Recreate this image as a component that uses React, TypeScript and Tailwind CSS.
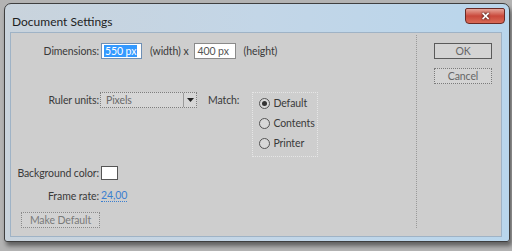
import React from "react";

const font = "font-['Lato','Liberation_Sans',sans-serif]";

const Radio = ({ label, checked }: { label: string; checked?: boolean }) => (
  <div className="flex items-center h-[14px] gap-[3px]">
    <span className="w-[11px] h-[11px] rounded-full border border-[#555] bg-[#d8d8d8] flex items-center justify-center">
      {checked && <span className="w-[5px] h-[5px] rounded-full bg-[#333]" />}
    </span>
    <span className="text-[#3a3a3a]">{label}</span>
  </div>
);

export default function App() {
  return (
    <div className={`w-[512px] h-[251px] bg-[#b3b3b3] pt-[3px] pl-[4px] overflow-hidden whitespace-nowrap ${font} text-[10.5px] tracking-[-0.1px] leading-[14px]`}>
      <div className="w-[506px] h-[239px] rounded-t-[7px] rounded-b-[3px] border border-[#3f3f3f] bg-gradient-to-r from-[#c9d3dc] via-[#c3d6e7] to-[#b9d6ec] shadow-[2px_4px_4px_rgba(0,0,0,0.45)] flex flex-col">
        {/* title bar */}
        <div className="h-[28px] flex items-start justify-between">
          <span className="mt-[11px] ml-[7px] text-[12px] tracking-normal leading-[14px] text-[#1e1e1e]">
            Document Settings
          </span>
          <div className="mt-[4px] mr-[4px] w-[40px] h-[16px] rounded-b-[4px] rounded-t-[2px] border border-[#6a2a25] bg-gradient-to-b from-[#e5a49a] via-[#c9483b] to-[#d96a56] flex items-center justify-center">
            <span className="text-white text-[11px] font-bold leading-none font-['Liberation_Sans',sans-serif] drop-shadow-[0_0_1px_#000]">
              ✕
            </span>
          </div>
        </div>

        {/* panel */}
        <div className="ml-[5px] w-[492px] h-[205px] border border-[#9fb3c6] bg-[#cecece] flex text-[#3a3a3a]">
          {/* left column */}
          <div className="w-[406px] h-[193px] mt-[2px] border-r border-dotted border-[#9a9a9a] flex flex-col">
            <div className="flex items-center h-[16px] mt-[8px]">
              <span className="w-[88px] text-right">Dimensions:</span>
              <div className="ml-[2px] w-[41px] h-[16px] border border-[#6e8fb5] bg-white flex items-center pl-[2px]">
                <span className="bg-[#3399ff] text-white px-[1px] leading-[12px]">550 px</span>
              </div>
              <span className="ml-[8px]">(width) x</span>
              <div className="ml-[5px] w-[42px] h-[16px] border border-[#8a8a8a] bg-white flex items-center pl-[3px] text-[#555]">
                400 px
              </div>
              <span className="ml-[8px]">(height)</span>
            </div>

            <div className="flex items-start mt-[33px]">
              <span className="w-[88px] text-right h-[16px] flex items-center justify-end">Ruler units:</span>
              <div className="ml-[1px] w-[97px] h-[16px] border border-dotted border-[#7e7e7e] bg-[#d6d6d6] flex items-center">
                <span className="flex-1 pl-[5px] text-[#6a6a6a]">Pixels</span>
                <span className="w-[13px] h-full border-l border-[#9a9a9a] flex items-center justify-center">
                  <svg width="7" height="4" viewBox="0 0 7 4">
                    <path d="M0 0h7L3.5 4z" fill="#222" />
                  </svg>
                </span>
              </div>
              <span className="ml-[11px] h-[16px] flex items-center">Match:</span>
              <div className="ml-[13px] w-[66px] h-[65px] border border-dotted border-[#e6e6e6] pl-[6px] pt-[3px] flex flex-col gap-[6px]">
                <Radio label="Default" checked />
                <Radio label="Contents" />
                <Radio label="Printer" />
              </div>
            </div>

            <div className="flex items-center h-[14px] mt-[9px]">
              <span className="w-[88px] text-right">Background color:</span>
              <span className="ml-[2px] w-[17px] h-[14px] border border-[#555] bg-white" />
            </div>

            <div className="flex items-center h-[16px] mt-[8px]">
              <span className="w-[88px] text-right">Frame rate:</span>
              <span className="ml-[2px] text-[#3b7fd0] border-b border-dotted border-[#3b7fd0] leading-[12px]">24,00</span>
            </div>

            <div className="mt-[9px] ml-[10px] w-[79px] h-[16px] border border-dotted border-[#8a8a8a] bg-[#d2d2d2] flex items-center justify-center text-[#7a7a7a]">
              Make Default
            </div>
          </div>

          {/* right column */}
          <div className="flex flex-col pl-[17px] pt-[10px]">
            <div className="w-[58px] h-[16px] border border-[#5a5a5a] bg-[#d4d4d4] flex items-center justify-center text-[#666]">
              OK
            </div>
            <div className="mt-[9px] w-[58px] h-[16px] border border-dotted border-[#7a7a7a] bg-[#d4d4d4] flex items-center justify-center text-[#666]">
              Cancel
            </div>
          </div>
        </div>
      </div>
    </div>
  );
}
